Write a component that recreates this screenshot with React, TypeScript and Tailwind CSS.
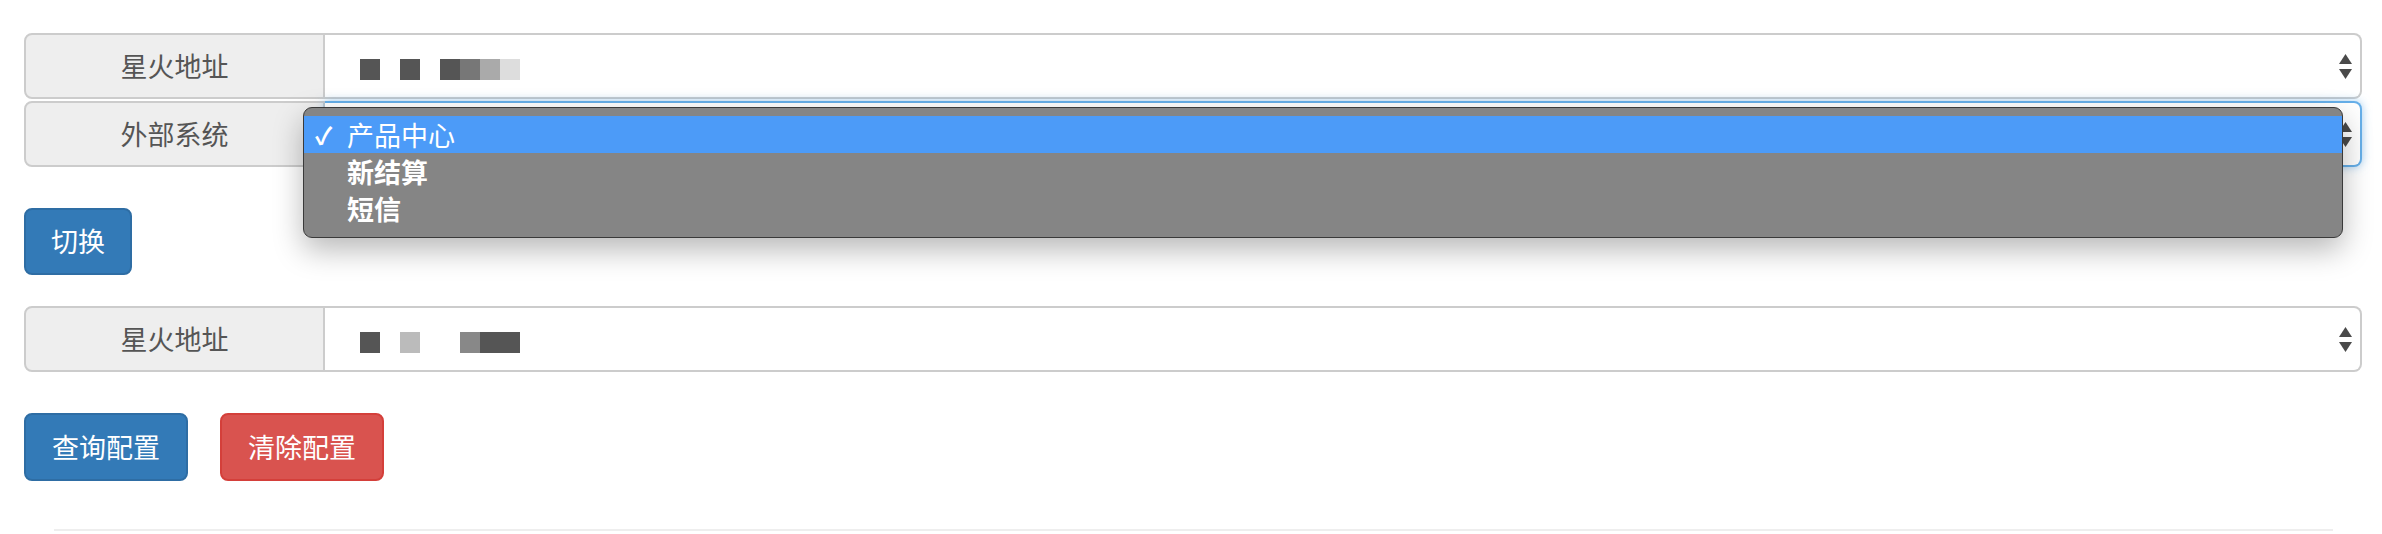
import React from 'react';

const FONT = { fontFamily: '"Noto Sans CJK SC", "Noto Sans", sans-serif' };

function Arrows() {
  return (
    <svg width="13" height="25" viewBox="0 0 13 25" className="shrink-0">
      <path d="M6.5 0 L13 10 L0 10 Z" fill="#4a4a4a" />
      <path d="M0 15 L13 15 L6.5 25 Z" fill="#4a4a4a" />
    </svg>
  );
}

// redacted value: grey blocks
function Masked({ blocks }: { blocks: { w: number; c: string; gap?: number }[] }) {
  return (
    <div className="flex items-center h-[21px] mt-[6px]">
      {blocks.map((b, i) => (
        <div key={i} className="h-[21px]" style={{ width: b.w, background: b.c, marginLeft: b.gap ?? 0 }} />
      ))}
    </div>
  );
}

function Field({
  label,
  focused,
  children,
}: {
  label: string;
  focused?: boolean;
  children?: React.ReactNode;
}) {
  return (
    <div className="flex h-[66px]">
      <div className="w-[301px] shrink-0 flex items-center justify-center bg-[#eeeeee] border-2 border-[#cccccc] rounded-l-[8px] text-[27px] text-[#555555]">
        {label}
      </div>
      <div
        className={
          focused
            ? 'flex-1 flex items-center justify-between bg-white border-2 border-l-0 border-[#66afe9] rounded-r-[8px] pl-[35px] pr-[8px] shadow-[0_0_10px_rgba(102,175,233,0.6)]'
            : 'flex-1 flex items-center justify-between bg-white border-2 border-l-0 border-[#cccccc] rounded-r-[8px] pl-[35px] pr-[8px]'
        }
      >
        <div>{children}</div>
        <Arrows />
      </div>
    </div>
  );
}

const options = ['产品中心', '新结算', '短信'];

export default function App() {
  return (
    <div className="w-[2382px] h-[534px] bg-white overflow-hidden pl-[24px] pr-[20px] pt-[33px]" style={FONT}>
      <Field label="星火地址">
        <Masked
          blocks={[
            { w: 20, c: '#555555' },
            { w: 20, c: '#555555', gap: 20 },
            { w: 20, c: '#555555', gap: 20 },
            { w: 20, c: '#777777' },
            { w: 20, c: '#aaaaaa' },
            { w: 20, c: '#dddddd' },
          ]}
        />
      </Field>
      <div className="relative mt-[2px]">
        <Field label="外部系统" focused />
        {/* native dropdown menu open over the select */}
        <div className="absolute left-[279px] top-[6px] w-[2040px] h-[131px] z-10 bg-[#858585] border border-[#3a3a3a] rounded-[9px] pt-[8px] shadow-[0_12px_30px_rgba(0,0,0,0.28)] text-white text-[27px]">
          {options.map((o, i) => (
            <div
              key={o}
              className={
                i === 0
                  ? 'flex items-center h-[37px] bg-[#4c9bf8]'
                  : 'flex items-center h-[37px] font-bold'
              }
            >
              <span className="w-[43px] pl-[11px] text-[24px] font-bold leading-none">{i === 0 ? '✓' : ''}</span>
              <span className="leading-none">{o}</span>
            </div>
          ))}
        </div>
      </div>

      <div className="mt-[41px]">
        <button className="h-[67px] px-[25px] bg-[#337ab7] border-2 border-[#2e6da4] rounded-[8px] text-white text-[27px]">
          切换
        </button>
      </div>

      <div className="mt-[31px]">
        <Field label="星火地址">
          <Masked
            blocks={[
              { w: 20, c: '#555555' },
              { w: 20, c: '#bbbbbb', gap: 20 },
              { w: 20, c: '#888888', gap: 40 },
              { w: 40, c: '#555555' },
            ]}
          />
        </Field>
      </div>

      <div className="mt-[41px] flex gap-[32px]">
        <button className="h-[68px] w-[164px] bg-[#337ab7] border-2 border-[#2e6da4] rounded-[8px] text-white text-[27px]">
          查询配置
        </button>
        <button className="h-[68px] w-[164px] bg-[#d9534f] border-2 border-[#d43f3a] rounded-[8px] text-white text-[27px]">
          清除配置
        </button>
      </div>

      <div className="mt-[48px] ml-[30px] mr-[29px] h-[2px] bg-[#eeeeee]" />
    </div>
  );
}
